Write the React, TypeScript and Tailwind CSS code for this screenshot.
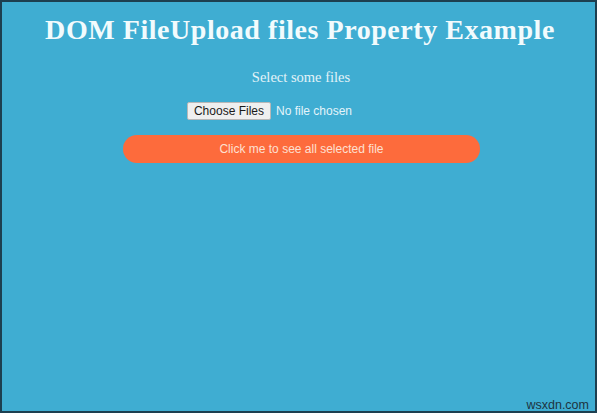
export default function App() {
  return (
    <div className="w-[600px] h-[417px] bg-white">
      <div className="relative w-[597px] h-[413px] border-2 border-[#1d3f50] bg-[#3fadd2] flex flex-col items-center">
        <h1 className="mt-[12px] ml-[3px] text-[28px] leading-[32px] tracking-[0.55px] font-bold text-[#f2fbfd] font-['Liberation_Serif',serif]">
          DOM FileUpload files Property Example
        </h1>
        <p className="mt-[23px] ml-[5px] text-[14.5px] leading-[16px] text-[#e3f3f8] font-['Liberation_Serif',serif]">
          Select some files
        </p>
        <div className="mt-[17px] mr-[58px] flex items-center gap-[5px] font-['Liberation_Sans',sans-serif] text-[12px]">
          <span className="px-[6px] h-[18px] flex items-center bg-[#efefef] border border-[#b8b8b8] rounded-[2px] text-[#1a1a1a]">
            Choose Files
          </span>
          <span className="text-[#e4f4fa]">No file chosen</span>
        </div>
        <div className="mt-[15px] ml-[6px] w-[357px] h-[28px] rounded-full bg-[#fd6b3c] flex items-center justify-center text-[12px] text-[#fde0d2] font-['Liberation_Sans',sans-serif]">
          Click me to see all selected file
        </div>
        <span className="absolute right-[6px] bottom-[0px] text-[12.5px] leading-none text-[#1d3440] font-['Liberation_Sans',sans-serif]">
          wsxdn.com
        </span>
      </div>
    </div>
  );
}
